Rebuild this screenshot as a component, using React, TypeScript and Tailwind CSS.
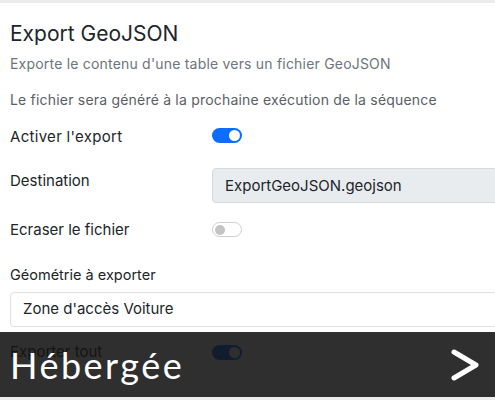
import React from 'react';

function Toggle({ on, className = '' }: { on: boolean; className?: string }) {
  return on ? (
    <div className={`w-[30px] h-[15px] rounded-full bg-[#0d6efd] flex items-center justify-end pr-[2px] ${className}`}>
      <div className="w-[11px] h-[11px] rounded-full bg-white" />
    </div>
  ) : (
    <div className={`w-[30px] h-[15px] rounded-full bg-white border border-[#cfcfcf] flex items-center pl-[2px] ${className}`}>
      <div className="w-[10px] h-[10px] rounded-full bg-[#c4c4c4]" />
    </div>
  );
}

export default function App() {
  return (
    <div className="relative w-[495px] h-[400px] overflow-hidden bg-white text-[#212529] font-['Inter',sans-serif]">
      <div className="h-[3px] bg-[#ececec]" />

      <div className="w-[540px] px-[10px]">
        <h1 className="mt-[17px] text-[21px] leading-[28px]">Export GeoJSON</h1>
        <p className="mt-[6px] text-[14px] leading-[20px] tracking-[0.2px] text-[#6c757d]">
          Exporte le contenu d'une table vers un fichier GeoJSON
        </p>
        <p className="mt-[16px] text-[14px] leading-[20px] tracking-[0.2px] text-[#5a6066]">
          Le fichier sera généré à la prochaine exécution de la séquence
        </p>

        {/* Options */}
        <div className="mt-[16px] flex items-start text-[15px] leading-[22px]">
          <span className="w-[202px] tracking-[0.3px]">Activer l'export</span>
          <Toggle on className="mt-[2px]" />
        </div>

        <div className="mt-[20px] flex items-start text-[15px] leading-[22px]">
          <span className="w-[202px] pt-[2px]">Destination</span>
          <div className="flex-1 h-[35px] flex items-center px-[12px] bg-[#e9ecef] border border-[#d6dade] rounded-[4px]">
            ExportGeoJSON.geojson
          </div>
        </div>

        <div className="mt-[16px] flex items-start text-[15px] leading-[22px]">
          <span className="w-[202px]">Ecraser le fichier</span>
          <Toggle on={false} className="mt-[3px]" />
        </div>

        <div className="mt-[23px] text-[14.5px] leading-[22px]">Géométrie à exporter</div>
        <div className="mt-[6px] h-[35px] flex items-center px-[12px] text-[15px] bg-white border border-[#dee2e6] rounded-[4px]">
          Zone d'accès Voiture
        </div>

        <div className="mt-[14px] flex items-start text-[15px] leading-[22px]">
          <span className="w-[202px]">Exporter tout</span>
          <Toggle on className="mt-[4px]" />
        </div>
      </div>

      {/* Overlay banner */}
      <div className="absolute left-0 right-0 top-[332px] h-[65px] bg-[rgba(18,18,18,0.88)] flex items-center justify-between pl-[10px] pr-[15px]">
        <span className="text-white text-[36px] font-['Lato',sans-serif] tracking-[2.5px]">Hébergée</span>
        <svg width="30" height="34" viewBox="0 0 30 34" fill="none">
          <polyline points="4,4 26,17 4,30" stroke="white" strokeWidth="5" strokeLinecap="round" strokeLinejoin="round" />
        </svg>
      </div>
      <div className="absolute left-0 right-0 top-[397px] h-[3px] bg-[#ececec]" />
    </div>
  );
}
